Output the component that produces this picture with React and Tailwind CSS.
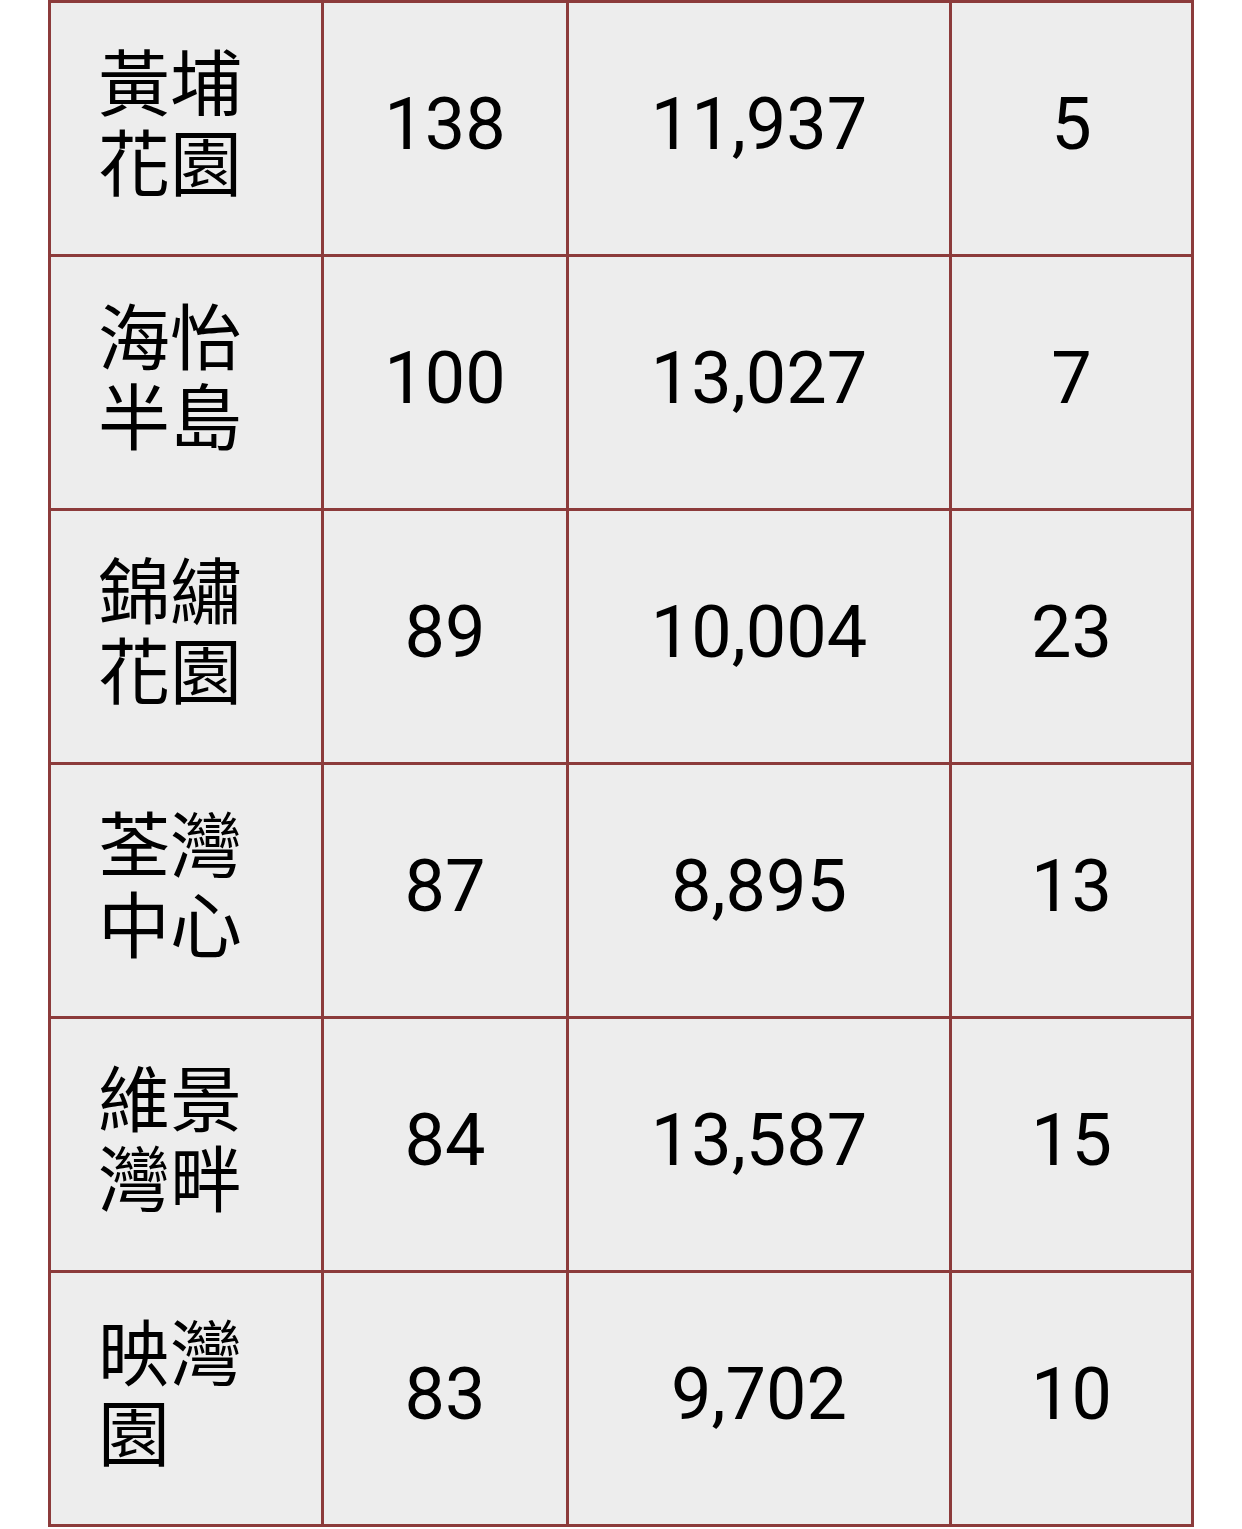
import React from 'react';

const rows = [
  ['黃埔花園', '138', '11,937', '5'],
  ['海怡半島', '100', '13,027', '7'],
  ['錦繡花園', '89', '10,004', '23'],
  ['荃灣中心', '87', '8,895', '13'],
  ['維景灣畔', '84', '13,587', '15'],
  ['映灣園', '83', '9,702', '10'],
];

const App = () => {
  return (
    <div className="w-[1242px] h-[1529px] bg-white pl-[48px]" style={{ fontFamily: "Roboto, 'Noto Sans CJK TC', sans-serif" }}>
      <div className="grid w-[1146px] grid-cols-[270px_242px_380px_239px] auto-rows-[251px] gap-[3px] bg-[#8c3b3b] p-[3px] text-[72px] text-black">
        {rows.map((r) => (
          <React.Fragment key={r[0]}>
            <div className="flex items-center bg-[#ededed] pl-[47px]">
              <div className="w-[146px] leading-[80px] pb-[6px]">{r[0]}</div>
            </div>
            <div className="flex items-center justify-center bg-[#ededed] pb-[8px]">{r[1]}</div>
            <div className="flex items-center justify-center bg-[#ededed] pb-[8px]">{r[2]}</div>
            <div className="flex items-center justify-center bg-[#ededed] pb-[8px]">{r[3]}</div>
          </React.Fragment>
        ))}
      </div>
    </div>
  );
};

export default App;
